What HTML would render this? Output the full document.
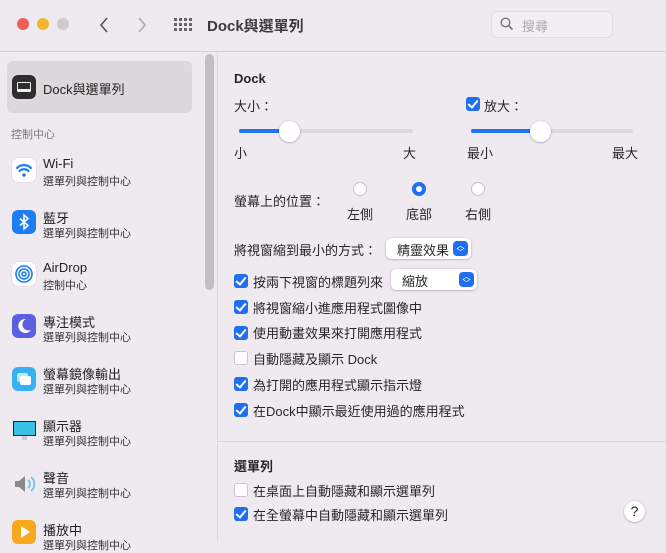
<!DOCTYPE html>
<html><head><meta charset="utf-8"><style>
*{margin:0;padding:0;box-sizing:border-box}
body{width:666px;height:542px;background:#efeaf0;font-family:"Liberation Sans","Noto Sans CJK TC",sans-serif;font-size:13px;color:#262626;position:relative;overflow:hidden}
.a{position:absolute;white-space:nowrap}
.tl{width:12px;height:12px;border-radius:50%;top:18px}
.cb{position:absolute;width:14px;height:14px;border-radius:3px;background:#1f6ff0;}
.cb::after{content:"";position:absolute;left:4px;top:1px;width:4px;height:8px;border:solid #fff;border-width:0 2px 2px 0;transform:rotate(40deg)}
.cb.off{background:#fff;border:1px solid #c8c4c9}
.cb.off::after{display:none}
.ico{position:absolute;left:12px;width:24px;height:24px;border-radius:6px}
.t1{position:absolute;left:43px;font-size:13px;color:#222}
.t2{position:absolute;left:43px;font-size:11px;color:#333}
.track{position:absolute;height:4px;border-radius:2px;background:#dcd8dd}
.fill{position:absolute;height:4px;border-radius:2px;background:#1f74f2}
.knob{position:absolute;width:21px;height:21px;border-radius:50%;background:#fff;box-shadow:0 0.5px 2px rgba(0,0,0,.35)}
.radio{position:absolute;width:14px;height:14px;border-radius:50%;background:#fff;border:1px solid #c5c1c6}
.pop{position:absolute;height:21px;background:#fff;border-radius:5px;box-shadow:0 0.5px 2px rgba(0,0,0,.3);padding:2px 0 0 11px}
.pop i{position:absolute;right:3px;top:3px;width:15px;height:15px;border-radius:4px;background:#1f6ff0;color:#fff;font-style:normal;font-size:8px;line-height:7px;text-align:center;padding-top:1px}
</style></head><body>
<div class="a tl" style="left:17px;background:#ed5e57"></div>
<div class="a tl" style="left:37px;background:#f4b52d"></div>
<div class="a tl" style="left:57px;background:#cfcbd0"></div>
<svg class="a" style="left:98px;top:16px" width="12" height="18"><path d="M9 2L3 9l6 7" stroke="#555" stroke-width="1.6" fill="none"/></svg>
<svg class="a" style="left:136px;top:16px" width="12" height="18"><path d="M3 2l6 7-6 7" stroke="#aaa" stroke-width="1.6" fill="none"/></svg>
<svg class="a" style="left:174px;top:18px" width="18" height="14"><g fill="#666"><rect x="0" y="0" width="3" height="3"/><rect x="5" y="0" width="3" height="3"/><rect x="10" y="0" width="3" height="3"/><rect x="15" y="0" width="3" height="3"/><rect x="0" y="5" width="3" height="3"/><rect x="5" y="5" width="3" height="3"/><rect x="10" y="5" width="3" height="3"/><rect x="15" y="5" width="3" height="3"/><rect x="0" y="10" width="3" height="3"/><rect x="5" y="10" width="3" height="3"/><rect x="10" y="10" width="3" height="3"/><rect x="15" y="10" width="3" height="3"/></g></svg>
<div class="a" style="left:207px;top:15px;font-size:15px;font-weight:bold;color:#3a3a3a">Dock與選單列</div>
<div class="a" style="left:491px;top:11px;width:122px;height:27px;border:1px solid #e2dde3;border-radius:6px;background:#f2eef3"></div>
<svg class="a" style="left:500px;top:17px" width="14" height="14"><circle cx="5.5" cy="5.5" r="4.3" stroke="#777" stroke-width="1.4" fill="none"/><path d="M8.6 8.6L12.5 12.5" stroke="#777" stroke-width="1.6"/></svg>
<div class="a" style="left:522px;top:16px;color:#aaa;font-size:13px">搜尋</div>
<div class="a" style="left:0;top:51px;width:666px;height:1px;background:#d2ced3"></div>
<div class="a" style="left:217px;top:52px;width:1px;height:490px;background:#dedade"></div>
<div class="a" style="left:205px;top:54px;width:9px;height:236px;border-radius:5px;background:#c3c0c4"></div>
<!-- sidebar -->
<div class="a" style="left:7px;top:61px;width:185px;height:52px;border-radius:6px;background:#dcd8dc"></div>
<div class="ico" style="top:75px;background:#2e2e2e"><div style="position:absolute;left:5px;top:7px;width:14px;height:10px;border:1.5px solid #eee;border-radius:1px;border-bottom-width:3px"></div></div>
<div class="t1" style="top:79px">Dock與選單列</div>
<div class="a" style="left:11px;top:126px;font-size:11px;color:#777">控制中心</div>
<div class="ico" style="top:158px;background:#fff;box-shadow:0 0 1px rgba(0,0,0,.3)"><svg width="24" height="24"><path d="M5 10a10 10 0 0 1 14 0M7.5 13a6.5 6.5 0 0 1 9 0" stroke="#1c7cf0" stroke-width="2.2" fill="none" stroke-linecap="round"/><circle cx="12" cy="17" r="1.8" fill="#1c7cf0"/></svg></div>
<div class="t1" style="top:156px">Wi-Fi</div><div class="t2" style="top:173px">選單列與控制中心</div>
<div class="ico" style="top:210px;background:#1f7df2"><svg width="24" height="24"><path d="M8 8.5l8 7-4 3.5V5l4 3.5-8 7" stroke="#fff" stroke-width="1.5" fill="none"/></svg></div>
<div class="t1" style="top:208px">藍牙</div><div class="t2" style="top:225px">選單列與控制中心</div>
<div class="ico" style="top:262px;background:#fff;box-shadow:0 0 1px rgba(0,0,0,.3)"><svg width="24" height="24"><g stroke="#1c7cf0" stroke-width="1.6" fill="none"><circle cx="12" cy="12" r="8"/><circle cx="12" cy="12" r="5"/><circle cx="12" cy="12" r="2"/></g></svg></div>
<div class="t1" style="top:260px">AirDrop</div><div class="t2" style="top:277px">控制中心</div>
<div class="ico" style="top:314px;background:#5b5fe0"><svg width="24" height="24"><path d="M14 5a7 7 0 1 0 5 11a6 6 0 0 1-5-11z" fill="#fff"/></svg></div>
<div class="t1" style="top:312px">專注模式</div><div class="t2" style="top:329px">選單列與控制中心</div>
<div class="ico" style="top:367px;background:#36b2f3"><div style="position:absolute;left:5px;top:6px;width:11px;height:9px;border-radius:2px;background:#bfe6fc"></div><div style="position:absolute;left:8px;top:9px;width:11px;height:9px;border-radius:2px;background:#fff"></div></div>
<div class="t1" style="top:364px">螢幕鏡像輸出</div><div class="t2" style="top:381px">選單列與控制中心</div>
<div class="a" style="left:13px;top:421px;width:23px;height:15px;background:#3bc0e8;border:1.5px solid #222"></div><div class="a" style="left:22px;top:436px;width:5px;height:4px;background:#ccc"></div>
<div class="t1" style="top:416px">顯示器</div><div class="t2" style="top:433px">選單列與控制中心</div>
<svg class="a" style="left:12px;top:472px" width="26" height="24"><path d="M3 9h4l6-5v16l-6-5H3z" fill="#8a8a8a"/><path d="M16 8a5 5 0 0 1 0 8M19 5a9 9 0 0 1 0 14" stroke="#6fc6e8" stroke-width="1.8" fill="none"/></svg>
<div class="t1" style="top:468px">聲音</div><div class="t2" style="top:485px">選單列與控制中心</div>
<div class="ico" style="top:520px;background:#f8a81c"><svg width="24" height="24"><path d="M9 6v12l9-6z" fill="#fff"/></svg></div>
<div class="t1" style="top:520px">播放中</div><div class="t2" style="top:537px">選單列與控制中心</div>
<!-- right -->
<div class="a" style="left:234px;top:71px;font-weight:bold">Dock</div>
<div class="a" style="left:234px;top:96px">大小：</div>
<div class="track" style="left:239px;top:129px;width:174px"></div>
<div class="fill" style="left:239px;top:129px;width:50px"></div>
<div class="knob" style="left:279px;top:121px"></div>
<div class="a" style="left:234px;top:143px">小</div>
<div class="a" style="left:403px;top:143px">大</div>
<div class="cb" style="left:466px;top:97px"></div>
<div class="a" style="left:484px;top:96px">放大：</div>
<div class="track" style="left:471px;top:129px;width:162px"></div>
<div class="fill" style="left:471px;top:129px;width:70px"></div>
<div class="knob" style="left:530px;top:121px"></div>
<div class="a" style="left:467px;top:143px">最小</div>
<div class="a" style="left:612px;top:143px">最大</div>
<div class="a" style="left:234px;top:191px">螢幕上的位置：</div>
<div class="radio" style="left:353px;top:182px"></div>
<div class="radio" style="left:412px;top:182px;border:4px solid #1f6ff0"></div>
<div class="radio" style="left:471px;top:182px"></div>
<div class="a" style="left:347px;top:204px">左側</div>
<div class="a" style="left:406px;top:204px">底部</div>
<div class="a" style="left:465px;top:204px">右側</div>
<div class="a" style="left:234px;top:240px">將視窗縮到最小的方式：</div>
<div class="pop" style="left:386px;top:238px;width:85px">精靈效果<i>︿<br>﹀</i></div>
<div class="cb" style="left:234px;top:274px"></div><div class="a" style="left:253px;top:272px">按兩下視窗的標題列來</div>
<div class="pop" style="left:391px;top:269px;width:86px">縮放<i>︿<br>﹀</i></div>
<div class="cb" style="left:234px;top:300px"></div><div class="a" style="left:253px;top:298px">將視窗縮小進應用程式圖像中</div>
<div class="cb" style="left:234px;top:326px"></div><div class="a" style="left:253px;top:323px">使用動畫效果來打開應用程式</div>
<div class="cb off" style="left:234px;top:351px"></div><div class="a" style="left:253px;top:349px">自動隱藏及顯示 Dock</div>
<div class="cb" style="left:234px;top:377px"></div><div class="a" style="left:253px;top:375px">為打開的應用程式顯示指示燈</div>
<div class="cb" style="left:234px;top:403px"></div><div class="a" style="left:253px;top:401px">在Dock中顯示最近使用過的應用程式</div>
<div class="a" style="left:218px;top:441px;width:448px;height:1px;background:#d8d4d9"></div>
<div class="a" style="left:234px;top:456px;font-weight:bold">選單列</div>
<div class="cb off" style="left:234px;top:483px"></div><div class="a" style="left:253px;top:481px">在桌面上自動隱藏和顯示選單列</div>
<div class="cb" style="left:234px;top:507px"></div><div class="a" style="left:253px;top:505px">在全螢幕中自動隱藏和顯示選單列</div>
<div class="a" style="left:624px;top:501px;width:21px;height:21px;border-radius:50%;background:#fff;box-shadow:0 0.5px 2px rgba(0,0,0,.35);text-align:center;line-height:21px;font-size:14px">?</div>
</body></html>
